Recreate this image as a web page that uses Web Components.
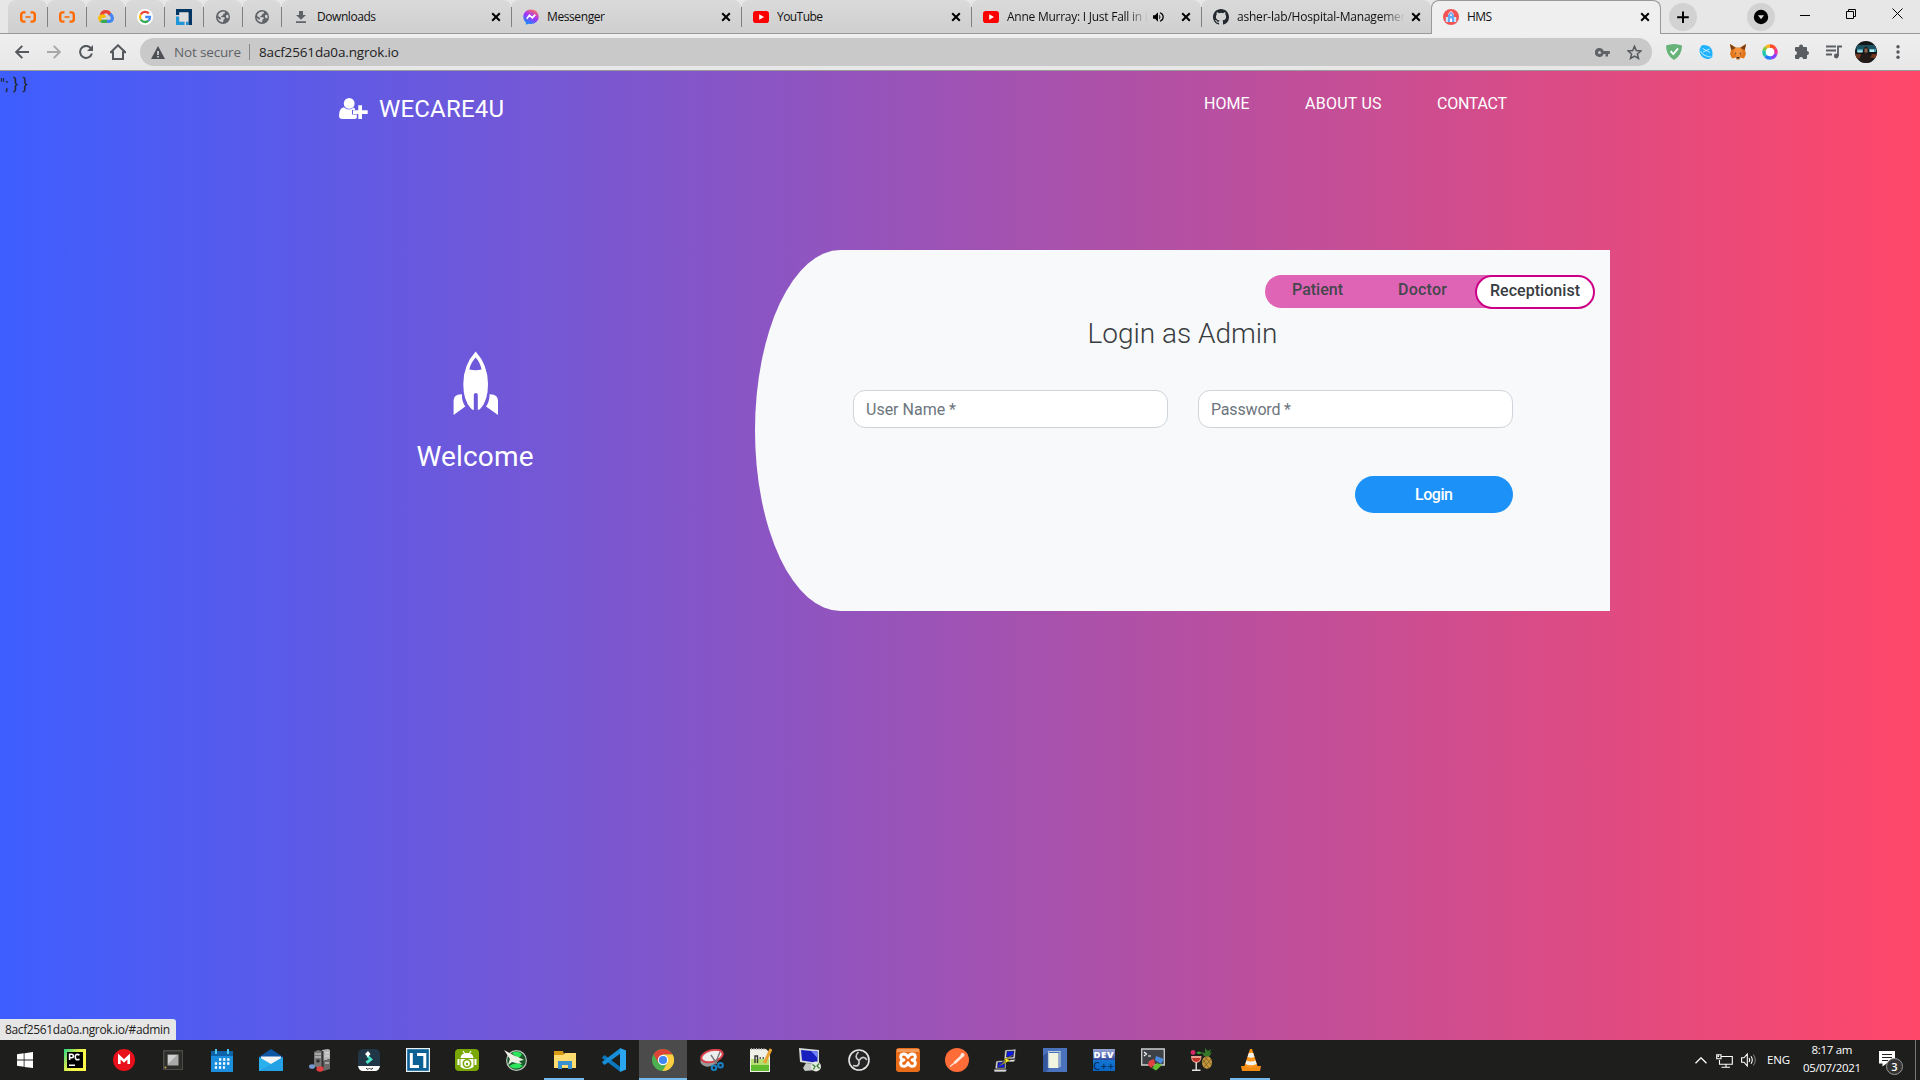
<!DOCTYPE html>
<html lang="en">
<head>
<meta charset="utf-8">
<title>HMS</title>
<style>
html,body{margin:0;padding:0;width:1920px;height:1080px;overflow:hidden;background:#202020}
body{font-family:"Open Sans","Noto Sans",sans-serif}
</style>
</head>
<body>
<desktop-screen></desktop-screen>
<script>
const ICONS = {
ali:[16,16,'<g fill="none" stroke="#ff6a00" stroke-width="2.4"><path d="M5.5 3.4H3.6Q1.2 3.4 1.2 6V10Q1.2 12.6 3.6 12.6H5.5M10.5 3.4H12.4Q14.8 3.4 14.8 6V10Q14.8 12.6 12.4 12.6H10.5"/><path d="M5.5 8H10.5" stroke-width="1.6"/></g>'],
gcp:[16,16,'<g fill="none" stroke-width="3.2"><path d="M3.3 6.3C4.5 1.6 10.6 1.3 12.2 6" stroke="#ea4335"/><path d="M12 5.2C15.5 7.5 14.8 12.2 11.5 12.3H8" stroke="#4285f4"/><path d="M9 12.3H4.8Q3.4 12.3 2.5 11.4" stroke="#34a853"/><path d="M3 11.7C.6 9.5 1.7 6.9 4.4 6.8Q6 6.8 7 8.4" stroke="#fbbc05"/></g>'],
google:[16,16,'<circle cx="8" cy="8" r="8" fill="#fff"/><g fill="none" stroke-width="2.3"><path d="M11.8 4.6A5 5 0 0 0 3.7 5.5" stroke="#ea4335"/><path d="M3.7 5.5A5 5 0 0 0 3.7 10.5" stroke="#fbbc05"/><path d="M3.7 10.5A5 5 0 0 0 11.4 11.7" stroke="#34a853"/><path d="M11.4 11.7Q13 10.4 13 8H8.2" stroke="#4285f4"/></g>'],
linux:[16,16,'<path fill="#003764" d="M0 0H16V16H12.4V3.4H3.4V6H0z"/><path fill="#2096d8" d="M0 7.5H3.4V12.5H8.5V16H0zM10 12.5H12.4V16H10z"/><path fill="#ddd" d="M3.4 3.4H12.4V12.5H3.4z"/>'],
globe:[14,14,'<circle cx="7" cy="7" r="7" fill="#5f6368"/><path fill="#d5d5d5" d="M8 1.4Q9.6 1.8 9 3.2L7.4 3.8 7 5.3 5.2 6.2 5.4 7.2H8.2L9 8.3 7.6 9.6 7 12.4Q2.4 12 1.5 7.6L4 9.8 5 9 4.6 7.6 2.6 6.6Q2 5.6 2.3 4.6 4 1.5 8 1.4zM10.2 5L12.2 4.8 12.7 7.4 11 8.6 10 7z"/>'],
download:[10,12,'<path fill="#5f6368" d="M3 0H7V4H10L5 8.7 0 4H3zM0 10.3H10V12H0z"/>'],
messenger:[16,16,'<defs><linearGradient id="m" x1=".2" y1="1" x2=".7" y2="0"><stop stop-color="#0099ff"/><stop offset=".55" stop-color="#a033ff"/><stop offset="1" stop-color="#ff7061"/></linearGradient></defs><path fill="url(#m)" d="M8 .5C3.6.5.3 3.6.3 7.8.3 10 1.2 12 2.8 13.3L3 15.8 5.3 14.7C11 16 15.7 12.6 15.7 7.8 15.7 3.6 12.4.5 8 .5z"/><path fill="none" stroke="#fff" stroke-width="1.7" d="M3.8 9.8L6.4 6.3 9.4 8.8 12.2 5.6"/>'],
youtube:[16,12,'<rect width="16" height="12" rx="2.8" fill="#f00"/><path fill="#fff" d="M6.2 3.2L11 6 6.2 8.8z"/>'],
github:[16,16,'<path fill="#24292f" d="M8 0C3.58 0 0 3.58 0 8c0 3.54 2.29 6.53 5.47 7.59.4.07.55-.17.55-.38 0-.19-.01-.82-.01-1.49-2.01.37-2.53-.49-2.69-.94-.09-.23-.48-.94-.82-1.13-.28-.15-.68-.52-.01-.53.63-.01 1.08.58 1.23.82.72 1.21 1.87.87 2.33.66.07-.52.28-.87.51-1.07-1.78-.2-3.64-.89-3.64-3.95 0-.87.31-1.59.82-2.15-.08-.2-.36-1.02.08-2.12 0 0 .67-.21 2.2.82a7.6 7.6 0 0 1 4 0c1.53-1.04 2.2-.82 2.2-.82.44 1.1.16 1.92.08 2.12.51.56.82 1.27.82 2.15 0 3.07-1.87 3.75-3.65 3.95.29.25.54.73.54 1.48 0 1.07-.01 1.93-.01 2.2 0 .21.15.46.55.38A8 8 0 0 0 16 8c0-4.42-3.58-8-8-8z"/>'],
hms:[16,16,'<circle cx="8" cy="8" r="8" fill="#f05454"/><path fill="#f9b9b9" d="M8 1.5L11 4.5V13H5V4.5z"/><path fill="#64a9f5" d="M5 6L8 3 11 6V13H5z"/><path fill="#c6e4ff" d="M2.8 8H5V13H2.8zM11 8H13.2V13H11z"/><path fill="#fff" d="M7 9.5H9V13H7zM7.3 5.2H8.7V7H7.3z"/>'],
close:[10,10,'<path stroke="#000" stroke-width="2" d="M1.2 1.2L8.8 8.8M8.8 1.2L1.2 8.8"/>'],
speaker:[11,10,'<path d="M0 3.2H2L5 .2V9.8L2 6.8H0z"/><path d="M6.3 2.4Q8.4 5 6.3 7.6z"/><path fill="none" stroke="#000" stroke-width="1.2" d="M7 .8Q10.2 2 10.2 5T7 9.2"/>'],
plus:[28,28,'<circle cx="14" cy="14" r="14" fill="#d2d2d2"/><path stroke="#000" stroke-width="2" d="M14 8.5V20M8.2 14.2H19.8"/>'],
down:[28,28,'<circle cx="14" cy="14" r="14" fill="#d2d2d2"/><circle cx="14" cy="14" r="7.2"/><path fill="#ddd" d="M11 12.3H17L14 16.3z"/>'],
min:[10,10,'<path stroke="#000" d="M0 6.5H10"/>'],
restore:[10,10,'<path fill="none" stroke="#000" d="M.5 2.5H7.5V9.5H.5zM2.5 2V.5H9.5V7.5H8"/>'],
winx:[11,11,'<path stroke="#000" d="M.5 .5L10.5 10.5M10.5 .5L.5 10.5"/>'],
back:[14,14,'<path fill="none" stroke="#55595e" stroke-width="1.9" d="M7.3 .8L1.2 7 7.3 13.2M1.2 7H14"/>'],
fwd:[14,14,'<path fill="none" stroke="#a7a7a7" stroke-width="1.9" d="M6.7 .8L12.8 7 6.7 13.2M12.8 7H0"/>'],
reload:[14,14,'<path fill="none" stroke="#55595e" stroke-width="2" d="M12.2 3.7A6 6 0 1 0 12.9 8.5"/><path fill="#55595e" d="M14 0V6H8z"/>'],
home:[16,16,'<path fill="none" stroke="#55595e" stroke-width="2" d="M.8 8.2L8 1.3 15.2 8.2H13V15H3V8.2z"/>'],
warn:[14,13,'<path fill="#4c5054" d="M7 0L14 13H0z"/><path stroke="#ddd" stroke-width="1.6" d="M7 5V9M7 10V11.6"/>'],
key:[15,9,'<path fill="#5f6368" fill-rule="evenodd" d="M4.5 0A4.5 4.5 0 1 0 8.6 6H10.5V8.5H13V6H14.8V3H8.6A4.5 4.5 0 0 0 4.5 0zM4.5 3A1.5 1.5 0 1 1 4.5 6 1.5 1.5 0 0 1 4.5 3z"/>'],
star:[15,15,'<path fill="none" stroke="#55595e" stroke-width="1.5" d="M7.5 1.3L9.3 5.6 13.9 6 10.4 9 11.5 13.5 7.5 11.1 3.5 13.5 4.6 9 1.1 6 5.7 5.6z"/>'],
shield:[16,16,'<path fill="#67b279" d="M8 0Q12 0 16 1.5 16 11.5 8 16 0 11.5 0 1.5 4 0 8 0z"/><path fill="none" stroke="#fff" stroke-width="1.8" d="M4.6 7.2L7.3 10.2 12 4.4"/>'],
bolt:[16,16,'<path fill="#1fb2ff" d="M3.5 1.5Q1.2 4.5 1.6 8 2.5 13 8 14.7 12 15.5 14.3 13.3 15 9 14 6 12 1.5 7.5 1.2 5 .8 3.5 1.5z"/><path fill="none" stroke="#9fe0ff" stroke-width="1.1" d="M2.5 7Q5 12.5 13.5 13"/><path fill="none" stroke="#e2f5ff" stroke-width=".8" d="M4.5 4.5L12 8.5M5 8L11.5 5"/>'],
fox:[18,16,'<path fill="#e2761b" d="M1 0L7 3.5H11L17 0 16 6 17 10 15 14.5 11 13.5 10.5 15.5H7.5L7 13.5 3 14.5 1 10 2 6z"/><path fill="#f5903b" d="M6 4L4 9.5 7 10 8 15H10L11 10 14 9.5 12 4z"/><path fill="#763d16" d="M1 0L6.5 4 2.3 6zM17 0L11.5 4 15.7 6z"/><path fill="#233447" d="M5.5 8.5L7.5 9 6.5 10zM12.5 8.5L10.5 9 11.5 10zM7.7 13H10.3V14.5H7.7z"/>'],
ring:[16,16,'<g fill="none" stroke-width="3.4"><path stroke="#ff4c2e" d="M8 2A6 6 0 0 1 13.2 5"/><path stroke="#f0319a" d="M13.2 5A6 6 0 0 1 13.7 10"/><path stroke="#8a3ffc" d="M13.7 10A6 6 0 0 1 9 13.9"/><path stroke="#267eff" d="M9 13.9A6 6 0 0 1 3.5 12"/><path stroke="#1dc8ad" d="M3.5 12A6 6 0 0 1 2.2 6.5"/><path stroke="#77ca3c" d="M2.2 6.5A6 6 0 0 1 4 3.5"/><path stroke="#ffb224" d="M4 3.5A6 6 0 0 1 8 2"/></g><circle cx="8" cy="8" r="4.1" fill="#fff"/>'],
puzzle:[16,16,'<path fill="#5a5e63" d="M2 3H5.2A2 2 0 1 1 9 3H12.3Q13 3 13 4V7A2 2 0 1 1 13 11V14Q13 15 12 15H9A2 2 0 1 0 5 15H2Q1 15 1 14V11A2 2 0 1 0 1 7V4Q1 3 2 3z"/>'],
playlist:[16,14,'<path stroke="#5a5e63" stroke-width="1.8" d="M0 1.5H10M0 5.5H10M0 9.5H6"/><path fill="none" stroke="#5a5e63" stroke-width="1.8" d="M12 11V1.5H16"/><circle cx="10.3" cy="11" r="2.4" fill="#5a5e63"/>'],
avatar:[22,22,'<defs><clipPath id="v"><circle cx="11" cy="11" r="11"/></clipPath></defs><g clip-path="url(#v)"><path fill="#14171a" d="M0 0H22V22H0z"/><path fill="#1d5160" d="M1 4H21V8H1z"/><path fill="#3c9db0" d="M2 8H8V11H2zM14 8H21V11H14z"/><path fill="#b9e6ea" d="M2.5 9.5H7.5V11.5H2.5zM15 8.5H19V11H15z"/><path fill="#71351d" d="M0 13H6L7 17 1 18zM17 13H22V17H15z"/><path fill="#241a17" d="M5 16Q6 13 9 13V7Q11 4 13 7V13Q16 14 17 22H5z"/><path fill="#8a6048" d="M9.5 7.5H12.5V11.5H9.5z"/></g>'],
dots:[4,14,'<g fill="#55595e"><circle cx="2" cy="1.8" r="1.7"/><circle cx="2" cy="7" r="1.7"/><circle cx="2" cy="12.2" r="1.7"/></g>'],
userplus:[29,21,'<g fill="#fff"><circle cx="10.2" cy="5.4" r="5.4"/><path d="M4.6 9.2Q10 13.5 14.8 9.6L16 10.8V12H13V16.5H17.8V20Q17 21 15.5 21H3.5Q0 21 0 17.5 0 10.5 4.6 9.2z"/><path d="M19.3 7.3H23V12.2H28.7V16H23V21H19.3V16H14V12.2H19.3z"/></g>'],
rocket:[46,65,'<path fill="#fff" fill-rule="evenodd" d="M22.7 .5Q35 14 35 33 35 49 28 57Q26.5 59 24.8 59V43.5Q24.8 42 22.8 42T20.8 43.5V59Q19 59 17.5 57 10.3 49 10.3 33 10.3 14 22.7 .5zM22.7 6.5Q17.5 12 16.3 18.5 22.7 20 28.5 18.5 27.5 12 22.7 6.5zM8.8 43.3Q9 51.5 12.3 55.5L.6 64V50Q.6 43 8.8 43.3zM36.6 43.3Q36.4 51.5 33 55.5L45 64V50Q45 43 36.6 43.3z"/>'],
win:[16,16,'<path fill="#fff" d="M0 2.3L6.7 1.3V7.6H0zM7.5 1.2L16 0V7.6H7.5zM0 8.4H6.7V14.7L0 13.8zM7.5 8.4H16V16L7.5 14.9z"/>'],
pycharm:[22,22,'<defs><linearGradient id="p" x2="1" y2=".7"><stop stop-color="#21d789"/><stop offset=".4" stop-color="#c5e850"/><stop offset=".7" stop-color="#fcf84a"/></linearGradient></defs><path fill="url(#p)" d="M0 0H22V22H0z"/><path d="M3 3H19V19H3z"/><path fill="none" stroke="#fff" stroke-width="1.6" d="M5.6 11V5.3H7.5Q9.4 5.3 9.4 7T7.5 8.7H5.6M15.5 6Q11.3 4 11.3 8 11.3 11.8 15.5 10.2M5 16.2H11"/>'],
mega:[22,22,'<circle cx="11" cy="11" r="11" fill="#e8101a"/><path fill="none" stroke="#fff" stroke-width="2.6" d="M6.3 15V7.5L11 12 15.7 7.5V15"/>'],
cpu:[20,20,'<path fill="#4a4a48" d="M0 0H20V20H0z"/><path fill="#2d2c29" d="M1.5 1.5H19V19H1.5z"/><path fill="#a9a9a9" d="M4.5 4.5H15.5V15.5H4.5z"/><path fill="#d0d0d0" d="M5 5H14L5 14z"/><circle cx="2.5" cy="17.5" r="1" fill="#c9a845"/>'],
calendar:[22,23,'<path fill="#1b8ede" d="M0 3H22V23H0z"/><path fill="#0e62a8" d="M0 2H22V7H0z"/><path stroke="#50c8f4" stroke-width="2" d="M5 0V5M17 0V5"/><path stroke="#fff" stroke-width="2.3" stroke-dasharray="2.3 1.8" d="M8 10.5H18.8M3.8 14.5H18.8M3.8 18.5H14"/>'],
mail:[24,22,'<path fill="#0d57a5" d="M0 8L12 0 24 8V12H0z"/><path fill="#f5f5f5" d="M2 7.5H22V14L12 16 2 12z"/><path fill="#2bb0ee" d="M0 8L12 15 24 8V22H0z"/><path fill="#1a87d4" d="M0 22L24 8V22z" opacity=".35"/>'],
servers:[22,23,'<path fill="#777" d="M5 3L9 1 13 2V21L5 17z"/><path fill="#b5b5b5" d="M13 1L19 0 21 1V10L14 12z"/><path fill="#6a6a6a" d="M14 12L21 10V20L14 22z"/><path fill="#333" d="M12.5 2H14.5V21H12.5z"/><path stroke="#ddd" d="M6 5H12M6 8H12M16 4H20M16 7H20M16 14H20"/><circle cx="9" cy="12" r="1.8" fill="#333"/><ellipse cx="3" cy="17.5" rx="3" ry="2.3" fill="#7698d1"/><ellipse cx="11" cy="20" rx="3.6" ry="2.7" fill="#e14040"/>'],
filmora:[22,22,'<rect width="22" height="22" rx="5" fill="#213646"/><path fill="#48e0c8" d="M10 6L15 10.5 9.5 15 7.5 12.5 11 10 8.5 8z"/><path fill="#fff" d="M10 2L12.5 5 10 8 7 5zM0 17H22Q21 22 17 22H5Q1 22 0 17z"/><path fill="none" stroke="#333" d="M8 19L10 20.5 11.5 19 13 20.5 15 19"/>'],
lt:[24,24,'<path fill="#e8f2f7" d="M0 0H24V24H0z"/><path fill="#0b6094" d="M1.2 1.2H22.8V22.8H1.2z"/><path fill="none" stroke="#fff" stroke-width="3" d="M5.3 5V18.5H13M11 6.5H18.8V20"/>'],
android:[24,22,'<rect width="24" height="22" rx="4" fill="#79a805"/><path fill="#fff" d="M5.5 9Q6 4 12 4T18.5 9V18Q16 20 12 20T5.5 18z"/><path stroke="#fff" stroke-width="1.2" d="M8 2L10 5M16 2L14 5"/><path stroke="#fff" stroke-width="2" d="M3.5 10V16M20.5 10V16"/><path stroke="#79a805" d="M5 9.5H19"/><circle cx="12" cy="14.5" r="3.7" fill="none" stroke="#79a805" stroke-width="1.6"/><circle cx="12" cy="15" r="1.2" fill="#79a805"/>'],
green:[23,22,'<circle cx="12.5" cy="11.5" r="9.9" fill="#1a5a2a" stroke="#b9c1ba" stroke-width="1.2"/><path fill="#2be45b" d="M8 4Q13 1 18 5L16 8 12 8zM5 17Q12 22 19 17L14 14 9 15z"/><path fill="#eef0e6" d="M0 1L11 7 14 8 20 11 15 12 18 15 12 14 8 13 4 16 6 10z"/>'],
folder:[22,20,'<path fill="#d99a13" d="M0 1H9L10 4H22V8H0z"/><path fill="#ffdc70" d="M0 5H9L11 3H22V18H0z"/><path fill="#3a91d0" d="M4 19V11H18V19H14V15H8V19z"/>'],
vscode:[24,24,'<path fill="#0b78bd" d="M.5 9L2.5 7 18.5 19V24L0 10z"/><path fill="#168fd8" d="M.5 15L2.5 17 18.5 5.5V0L0 14z"/><path fill="#29a6ef" d="M18 0L24 2.5V21.5L18 24z"/>'],
chrome:[22,22,'<circle cx="11" cy="11" r="11" fill="#4caf50"/><path fill="#dc4437" d="M1.6 5.3A11 11 0 0 1 20.6 5.6H11L6.2 13.5z"/><path fill="#ffcd40" d="M20.6 5.6A11 11 0 0 1 10.5 22L15.8 13 11 5.6z"/><circle cx="11" cy="11" r="5.2" fill="#fff"/><circle cx="11" cy="11" r="4.1" fill="#4285f4"/>'],
snip:[24,22,'<ellipse cx="10" cy="10" rx="10" ry="7" fill="#999" transform="rotate(-25 10 10)"/><ellipse cx="12" cy="7" rx="11" ry="5.8" fill="#eee" stroke="#d8414a" stroke-width="2" transform="rotate(-15 12 7)"/><path stroke="#777" stroke-width="1.4" d="M11 6L17 15M20 3L15 15"/><g fill="none" stroke="#1982c8" stroke-width="2"><circle cx="14" cy="18.7" r="2.3"/><circle cx="20.5" cy="16.3" r="2.3"/></g>'],
notepad:[22,24,'<path fill="#f0f0e9" d="M0 1H16L20 5V24H0z"/><path fill="#61bc30" d="M1 14H19V23H1z"/><path fill="#b6df72" d="M1 11H19V17H1z"/><path stroke="#333" stroke-width="1.4" fill="none" d="M5 15V8H7.5V15M9.5 10H11M12.5 10H14"/><path stroke="#e9a131" stroke-width="3" d="M21 1L14.5 15"/><path stroke="#aaa" stroke-dasharray="1 1.5" stroke-width="2" d="M1 1H15"/>'],
rdp:[22,24,'<path fill="#d7dcda" d="M0 0L20 2V17L1 14z"/><path fill="#1720be" d="M2 2L18.5 3.5V15L3 12.5z"/><path fill="#6f82ff" d="M12 3L18.5 3.6V10z"/><path fill="#c5c9c6" d="M7 15L14 16V20L17 22 6 23 4 20z"/><circle cx="17" cy="18.5" r="5" fill="#e5eadf"/><path fill="none" stroke="#36803b" stroke-width="1.3" d="M13.5 16.5L16 18.5 14.5 21.5M20 15.5L18 18 20.5 20.5"/>'],
obs:[22,22,'<circle cx="11" cy="11" r="10" fill="#252525" stroke="#e6e6e6" stroke-width="1.6"/><g fill="none" stroke="#ccc" stroke-width="1.7"><path d="M10.5 3Q5.5 8 11 11.5M11 11.5Q15 5.5 19 11M11 11.5Q12 18.5 5 16.5"/></g>'],
xampp:[24,24,'<rect width="24" height="24" rx="3" fill="#e96c19"/><path fill="#f29a58" d="M1 1H23V4H1z"/><path fill="none" stroke="#fff" stroke-width="2.8" stroke-linejoin="round" d="M8 12Q4.6 11.5 4.6 8.8 4.8 6 8 6 10.5 6 12 9.5 13.5 6 16 6 19.2 6 19.4 8.8 19.4 11.5 16 12 19.4 12.5 19.4 15.4 19.2 18.3 16 18.3 13.2 18.3 12 14.8 10.8 18.3 8 18.3 4.8 18.3 4.6 15.4 4.6 12.5 8 12z"/>'],
postman:[24,24,'<circle cx="12" cy="12" r="12" fill="#ff6c37"/><path stroke="#ffe8de" stroke-width="2.6" d="M9.5 15L17 8"/><path stroke="#ffe8de" stroke-width="1.3" d="M5 18.5L10 14.5"/><circle cx="17.5" cy="7" r="2" fill="#ffe8de"/>'],
putty:[23,23,'<g stroke="#111" stroke-width=".6"><path fill="#d5d5d5" d="M11 1L22 0 21 10 10 10zM2 12L12 11V20L1 20zM9 11L22 10 20 13 9 13zM0 20L13 20 12 23H0z"/><path fill="#0b18e7" d="M13 2.5L20 2 19 8H12.5zM4 13.5L10.5 13V18.5H3.5z"/></g><path fill="#fff22b" stroke="#665f00" stroke-width=".5" d="M19 6L10 10.5 12 12 5 17 16 11.5 13 10z"/>'],
book:[24,24,'<path fill="#4b72bd" d="M0 0H24V24H0z"/><path fill="#34569d" d="M0 8L6 3V20L3 24H0z"/><path fill="#f1f4df" d="M6 5H15.5V20H6z"/><path fill="none" stroke="#b9ccd9" stroke-width="1.2" d="M5.5 20V3.5H17V19"/>'],
lg:[24,24,'<path fill="#3e4247" stroke="#cfcfcf" stroke-width="1.3" d="M.7 1H23.3V17H.7z"/><path fill="none" stroke="#fff" stroke-width="1.2" d="M3 4L5.5 6 3 8M7 8H10"/><path fill="#4c8cde" d="M15 8L23 11 20 16 14 12z"/><path fill="#df4240" d="M8 13L13 11 14 16 10 20 7 17z"/><path fill="#63bf30" d="M16 15L21 17 15 22.5 11 20z"/>'],
cocktail:[23,24,'<path fill="#e9a08c" d="M1 8H11.5Q11.5 13.5 7 15H5.5Q1 13.5 1 8z"/><path fill="#c2322a" d="M2 10H10.5Q9.5 13.5 6.2 14 3 13.5 2 10z"/><path stroke="#e6e6e6" stroke-width="1.4" fill="none" d="M6.2 14.5V21.5M2 22.3H10.5"/><circle cx="3" cy="4.5" r="2.4" fill="#d32966"/><path fill="#35a030" d="M6 5Q9 2 12 5 9 7 6 5z"/><path fill="#34762a" d="M14 8L11.5 4 15 5 15 0 18 3 21 1 20 5 22 4 19 9z"/><ellipse cx="17" cy="14.5" rx="5" ry="6.2" fill="#c3973e"/><path stroke="#7d5c20" stroke-width=".8" d="M13 12L19 20M15 9L21.5 17M21 11L14 19M18 8.5L12.5 15"/>'],
vlc:[20,22,'<path fill="#f18c12" d="M0 17H20L19 22H1z"/><path fill="#ff951a" d="M9 0H11L16.5 17Q10 21 3.5 17z"/><path fill="#f2f2ed" d="M7.8 4H12.2L13.5 8Q10 9.5 6.5 8zM5.4 11.5Q10 13.5 14.6 11.5L15.6 15Q10 17.5 4.4 15z"/>'],
chev:[12,7,'<path fill="none" stroke="#fff" stroke-width="1.3" d="M.5 6.3L6 .8 11.5 6.3"/>'],
net:[17,14,'<path fill="none" stroke="#fff" stroke-width="1.1" d="M5.5 2.5H16.3V10.2H3.5V6M10 10V13M5.5 13.3H14M.7 .7H5V4.7H.7z"/><path fill="#fff" d="M1.5 1.3H3V3H1.5z"/>'],
vol:[16,14,'<path fill="none" stroke="#fff" stroke-width="1.1" d="M.6 4.8H3L6.3 1V13L3 9.2H.6zM8 5Q9.3 7 8 9M10 3.2Q12.6 7 10 10.8"/><path fill="none" stroke="#777" stroke-width="1.1" d="M12.2 1.5Q16.5 7 12.2 12.5"/>'],
note:[16,16,'<path fill="#fff" d="M0 0H16V12.4H7.5L3.5 15.6V12.4H0z"/><path stroke="#222" stroke-width="1.1" d="M3 3.5H13M3 6.5H13M3 9.5H9"/>']
};
const define = (name, render, after) => customElements.define(name, class extends HTMLElement {
  connectedCallback(){
    if (this.shadowRoot) return;
    this.attachShadow({mode:'open'}).innerHTML = render(this);
    if (after) after(this);
  }
});
define('ui-icon', el => {
  const [w,h,body] = ICONS[el.getAttribute('name')];
  return `<style>:host{display:block;flex:none;width:${w}px;height:${h}px}svg{display:block}</style><svg width="${w}" height="${h}" viewBox="0 0 ${w} ${h}">${body}</svg>`;
});
/* One line of text, tracked so that it fills the width given in its "w" attribute. */
define('fit-text', () => `<style>:host{display:block;flex:none;white-space:nowrap}span{display:inline-block}</style><span><slot></slot></span>`, el => {
  const span = el.shadowRoot.querySelector('span');
  const target = +el.getAttribute('w');
  const n = el.textContent.length;
  const track = (target - span.getBoundingClientRect().width) / (n - 1);
  span.style.letterSpacing = track.toFixed(3) + 'px';
  span.style.marginRight = (-track).toFixed(3) + 'px';
});
define('pinned-tab', el => `<style>:host{display:flex;width:39px;height:33px;flex:none;align-items:center;justify-content:center;background:linear-gradient(#dadada,#cfcfcf);border-radius:8px 8px 0 0;box-sizing:border-box;padding:1px 0 0 1px;position:relative}
:host::after{content:"";position:absolute;z-index:1;right:-1px;top:7px;width:1px;height:20px;background:#808080}</style><ui-icon name="${el.getAttribute('icon')}"></ui-icon>`);
define('browser-tab', el => `<style>:host{display:flex;width:230px;height:33px;flex:none;align-items:center;background:linear-gradient(#dadada,#cfcfcf);border-radius:8px 8px 0 0;box-sizing:border-box;padding:1px 10px 0 12px;position:relative;font-size:12px;color:#111}
:host(:not([last]):not([active]))::after{content:"";position:absolute;z-index:1;right:-1px;top:7px;width:1px;height:20px;background:#808080}
:host([active]){background:#efefef;border:1px solid #999;border-bottom:0;height:34px;padding:0 10px 0 11px;margin-bottom:-1px;color:#111}
:host([active]) ui-icon[name=close]{margin-top:-1px}
.ico{width:16px;display:flex;justify-content:center;margin-right:8px;flex:none}:host([active]) .ico{margin-top:-1px}
.t{flex:1;overflow:hidden;line-height:18px;margin-top:-1px}
:host([fade]) .t{-webkit-mask:linear-gradient(to right,#000 calc(100% - 22px),transparent);mask:linear-gradient(to right,#000 calc(100% - 22px),transparent);margin-right:6px}
.s{margin:0 17px 0 -1px}</style><div class="ico"><ui-icon name="${el.getAttribute('icon')}"></ui-icon></div><div class="t"><slot></slot></div>${el.hasAttribute('audio')?'<ui-icon class="s" name="speaker"></ui-icon>':''}<ui-icon name="close"></ui-icon>`);
define('tab-strip', () => `<style>:host{display:flex;height:34px;background:#e7e7e7;box-sizing:border-box;border-bottom:1px solid #999;padding-left:8px}
.ctl{display:flex;align-items:center;padding:0 0 1px 0;height:28px;box-sizing:border-box}.plus{margin:0 0 0 8px}.dn{margin-left:50px}.c{margin-right:36px}.g{margin-top:3px}</style>
<pinned-tab icon="ali"></pinned-tab><pinned-tab icon="ali"></pinned-tab><pinned-tab icon="gcp"></pinned-tab><pinned-tab icon="google"></pinned-tab><pinned-tab icon="linux"></pinned-tab><pinned-tab icon="globe"></pinned-tab><pinned-tab icon="globe"></pinned-tab>
<browser-tab icon="download"><fit-text w="59">Downloads</fit-text></browser-tab>
<browser-tab icon="messenger"><fit-text w="58">Messenger</fit-text></browser-tab>
<browser-tab icon="youtube"><fit-text w="46">YouTube</fit-text></browser-tab>
<browser-tab icon="youtube" audio fade><fit-text w="151">Anne Murray: I Just Fall in Lo</fit-text></browser-tab>
<browser-tab icon="github" fade last><fit-text w="171">asher-lab/Hospital-Managemen</fit-text></browser-tab>
<browser-tab icon="hms" active><fit-text w="25">HMS</fit-text></browser-tab>
<ui-icon class="plus g" name="plus"></ui-icon><ui-icon class="dn g" name="down"></ui-icon>
<div class="ctl" style="margin-left:25px"><ui-icon class="c" name="min"></ui-icon><ui-icon class="c" name="restore"></ui-icon><ui-icon name="winx"></ui-icon></div>`);
define('tool-bar', () => `<style>:host{display:flex;height:37px;box-sizing:border-box;align-items:center;background:linear-gradient(#efefef,#e7e7e7);border-bottom:1px solid #999;padding:0 20px 0 15px}
.nav{display:flex;align-items:center;width:125px;gap:18px;flex:none}.nav :last-child{margin-left:-1px}
.omni{display:flex;align-items:center;width:1512px;height:28px;border-radius:14px;background:#c9c9c9;box-sizing:border-box;padding:0 10px 0 11px;font-size:13.5px;color:#222;line-height:20px;flex:none}
.ns{color:#5f6368;margin-left:9px}.sep{width:1px;height:16px;background:#888;margin:0 9px 0 8px}.sp{flex:1}.ext{display:flex;align-items:center;flex:1;padding-left:14px}
.ext ui-icon{margin-right:16px}.ext .f{margin:0 15px 0 -1px}.ext .v{margin:0 19px 0 -3px}</style>
<div class="nav"><ui-icon name="back"></ui-icon><ui-icon name="fwd"></ui-icon><ui-icon name="reload"></ui-icon><ui-icon name="home"></ui-icon></div>
<div class="omni"><ui-icon name="warn"></ui-icon><fit-text class="ns" w="67">Not secure</fit-text><div class="sep"></div><fit-text w="140">8acf2561da0a.ngrok.io</fit-text><div class="sp"></div><ui-icon name="key" style="margin-right:17px"></ui-icon><ui-icon name="star"></ui-icon></div>
<div class="ext"><ui-icon name="shield"></ui-icon><ui-icon name="bolt"></ui-icon><ui-icon class="f" name="fox"></ui-icon><ui-icon name="ring"></ui-icon><ui-icon name="puzzle"></ui-icon><ui-icon name="playlist"></ui-icon><ui-icon class="v" name="avatar"></ui-icon><ui-icon name="dots"></ui-icon></div>`);
define('site-header', () => `<style>:host{display:flex;height:179px;align-items:flex-start;color:#fff;font-size:16px;line-height:24px}
.stray{width:339px;color:#212529;padding-top:2px;box-sizing:border-box;flex:none}
.brand{display:flex;width:865px;padding-top:27px;flex:none}.name{font-size:24px;line-height:24px;margin:-1px 0 0 11px}
nav{display:flex;gap:55.5px;padding-top:21px}</style>
<div class="stray"><fit-text w="28">"; } }</fit-text></div>
<div class="brand"><ui-icon name="userplus"></ui-icon><fit-text class="name" w="125">WECARE4U</fit-text></div>
<nav><fit-text w="45.5">HOME</fit-text><fit-text w="76.5">ABOUT US</fit-text><fit-text w="70">CONTACT</fit-text></nav>`);
define('welcome-panel', () => `<style>:host{display:flex;flex-direction:column;align-items:center;width:280px;padding-top:101px;color:#fff;font-size:28px;line-height:34px;flex:none}ui-icon{margin-left:2px}fit-text{margin-top:24px}</style><ui-icon name="rocket"></ui-icon><fit-text w="117">Welcome</fit-text>`);
define('role-tabs', () => `<style>:host{display:flex;width:330px;height:34px;align-self:flex-end;margin:25px 15px 0 0;font-weight:500;font-size:16px;line-height:24px;color:#43474c}
.bar{display:flex;width:210px;height:33px;background:#df64b5;border-radius:17px 0 0 17px;box-sizing:border-box;padding:3px 0 0 27px;gap:55px}
.fill{width:24px;height:33px;background:#df64b5;margin-right:-24px}
.on{position:relative;display:flex;justify-content:center;width:120px;height:34px;box-sizing:border-box;border:2px solid #cc0087;border-radius:17px;background:#fff;padding-top:2px;color:#383d41}</style>
<div class="bar"><fit-text w="51">Patient</fit-text><fit-text w="49">Doctor</fit-text></div><div class="fill"></div><div class="on"><fit-text w="90">Receptionist</fit-text></div>`);
define('text-field', () => `<style>:host{display:block;box-sizing:border-box;width:315px;height:38px;border:1px solid #ced4da;border-radius:12px;background:#fff;padding:7px 12px 5px;color:#6c757d;font-size:16px;line-height:24px}</style><slot></slot>`);
define('login-card', () => `<style>:host{display:flex;flex-direction:column;width:855px;height:361px;background:#f8f9fa;border-radius:10% 0 0 10%/50% 0 0 50%;box-sizing:border-box}
.title{align-self:center;font-size:28px;line-height:34px;font-weight:300;color:#383d41;margin-top:8px}
.fields{display:flex;gap:30px;margin:39px 0 0 98px}
.btn{align-self:flex-end;display:flex;justify-content:center;width:158px;height:37px;border-radius:18.5px;background:#1c92f8;color:#fff;font-weight:500;font-size:16px;line-height:24px;margin:48px 97px 0 0;box-sizing:border-box;padding-top:7px}</style>
<role-tabs></role-tabs><fit-text class="title" w="190">Login as Admin</fit-text>
<div class="fields"><text-field><fit-text w="90">User Name *</fit-text></text-field><text-field><fit-text w="80">Password *</fit-text></text-field></div>
<div class="btn"><fit-text w="38">Login</fit-text></div>`);
define('web-page', () => `<style>:host{display:block;height:969px;background:linear-gradient(to right,#3e5eff,#ff4769);font-family:Roboto,"Open Sans",sans-serif;position:relative;overflow:hidden}
main{display:flex;padding-left:335px;gap:140px;align-items:flex-start}
.status{position:absolute;left:0;bottom:0;width:176px;height:21px;box-sizing:border-box;background:#e6e6e6;border-radius:0 3px 0 0;padding:1px 0 0 5px;font:12px/19px "Open Sans",sans-serif;color:#222}</style>
<site-header></site-header><main><welcome-panel></welcome-panel><login-card></login-card></main>
<div class="status"><fit-text w="165">8acf2561da0a.ngrok.io/#admin</fit-text></div>`);
define('task-button', el => `<style>:host{display:flex;width:49px;height:40px;flex:none;align-items:center;justify-content:center;position:relative}
:host([active]){background:linear-gradient(to right,transparent 1px,#4b4b4b 1px)}
i{position:absolute;bottom:0;height:2px;left:4px;width:40px;background:#76b9ed}:host([active]) i{left:1px;width:48px}</style><ui-icon name="${el.getAttribute('icon')}"></ui-icon>${el.hasAttribute('running')?'<i></i>':''}`);
define('system-tray', () => `<style>:host{display:flex;align-items:center;height:40px;width:225px;color:#fff;font-size:11.5px;flex:none}
.clock{display:flex;flex-direction:column;align-items:center;line-height:18px;width:60px;margin:-2px 0 0 12px}
.n{position:relative;margin:-2px 0 0 17px}.b{position:absolute;left:7px;top:7px;width:17px;height:17px;box-sizing:border-box;border:1px solid #999;border-radius:50%;background:#333;font:600 11px/15px "Open Sans",sans-serif;text-align:center}
.e{width:1px;height:40px;background:#777;margin-left:20px}</style>
<ui-icon name="chev"></ui-icon><ui-icon name="net" style="margin:2px 0 0 9px"></ui-icon><ui-icon name="vol" style="margin-left:8px"></ui-icon><fit-text w="23" style="margin:-1px 0 0 10px">ENG</fit-text>
<div class="clock"><fit-text w="41">8:17 am</fit-text><fit-text w="58">05/07/2021</fit-text></div>
<div class="n"><ui-icon name="note"></ui-icon><div class="b">3</div></div><div class="e"></div>`);
define('task-bar', () => `<style>:host{display:flex;height:40px;background:#1e1e1d}.sp{flex:1}.apps{display:flex;margin-left:1px}</style>
<task-button icon="win"></task-button><div class="apps">${['pycharm','mega','cpu','calendar','mail','servers','filmora','lt','android','green','folder','vscode','chrome','snip','notepad','rdp','obs','xampp','postman','putty','book','dev','lg','cocktail','vlc'].map(n => n==='dev' ? '<dev-button></dev-button>' : `<task-button icon="${n}"${n==='chrome'?' active running':n==='folder'||n==='vlc'?' running':''}></task-button>`).join('')}</div><div class="sp"></div><system-tray></system-tray>`);
define('dev-button', () => `<style>:host{display:flex;width:49px;height:40px;align-items:center;justify-content:center;flex:none}
.d{width:22px;height:22px;background:linear-gradient(#98a6d5,#2e4a9e 50%,#1475d3 52%,#0966c4);display:flex;flex-direction:column;align-items:center;font:800 9.5px/12px "Open Sans",sans-serif;color:#fff}.p{color:#073263;font:600 11px/10px "Open Sans",sans-serif}</style><div class="d"><fit-text w="20">DEV</fit-text><fit-text class="p" w="21">C++</fit-text></div>`);
define('desktop-screen', () => `<style>:host{display:flex;flex-direction:column;width:1920px;height:1080px;overflow:hidden}</style><tab-strip></tab-strip><tool-bar></tool-bar><web-page></web-page><task-bar></task-bar>`);
</script>
</body>
</html>
